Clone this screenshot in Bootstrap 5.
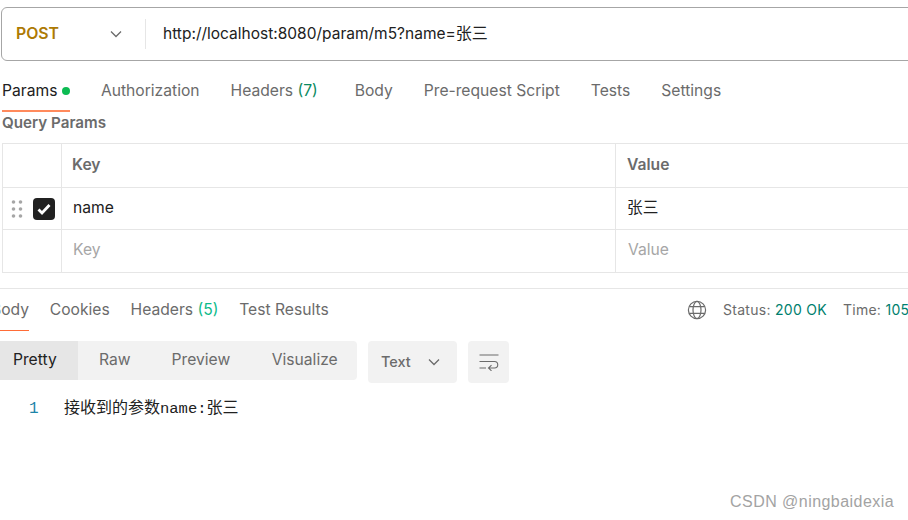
<!DOCTYPE html>
<html lang="zh">
<head>
<meta charset="utf-8">
<title>Postman</title>
<link rel="stylesheet" href="https://cdn.jsdelivr.net/npm/bootstrap@5.3.0/dist/css/bootstrap.min.css">
<style>
html,body{margin:0;height:520px;overflow:hidden;background:#fff}
body{font-family:Inter,"Noto Sans CJK SC",sans-serif;font-size:15.65px;color:#212121;position:relative}
.urlbar{height:54px;margin:7px -40px 0 1px;border:1px solid #a6a6a6;border-radius:6px;padding-left:14px}
.method{width:129px;height:30px;color:#ad7a03;font-weight:600;font-size:15.8px;padding-right:22px}
.urltext{border-left:1px solid #e6e6e6;height:30px;padding-left:17px;line-height:28px;color:#212121;font-size:15.5px;white-space:nowrap}
.urltext span{font-size:16px}
.reqtabs{margin:12px 0 0 2px;height:39px}
.ptab{color:#6b6b6b;white-space:nowrap;height:39px;line-height:36px}
.ptab.on{color:#212121;margin-right:-.5px}
.ptab.on::after{content:"";display:block;height:2px;background:#ff8a5c;margin-top:1px}
.count{color:#0b8a60}
.dotg{width:8px;height:8px;border-radius:50%;background:#0cbb52;display:inline-block;margin-left:5px;vertical-align:1px}
.qtitle{margin:0 0 0 2px;height:22px;line-height:21px;font-weight:600;color:#6b6b6b;font-size:15.2px}
.ptable{margin:9px 0 0 2px;width:950px;border-top:1px solid #e6e6e6;border-left:1px solid #e6e6e6;border-bottom:1px solid #e6e6e6}
.prow{display:grid;grid-template-columns:58px 554px 1fr;border-bottom:1px solid #e6e6e6}
.prow:last-child{border-bottom:0}
.prow>div{padding-left:10px;padding-bottom:1px;display:flex;align-items:center;border-left:1px solid #e6e6e6}
.prow>div:first-child{border-left:0;padding-left:0;padding-bottom:0}
.prow>div:last-child{padding-left:11px}
.r1{height:44px;font-weight:600;color:#6b6b6b}
.r2{height:42px}
.r3{height:42px;color:#a6a6a6}
.r3>div{padding-bottom:3px!important}
.r2>div,.r3>div{padding-left:11px}
.r3>div:last-child{padding-left:12px}
.r2>div:first-child,.r3>div:first-child{padding-left:0}
.grip{margin-left:8px}
.chk{width:22px;height:22px;border-radius:4px;background:#212121;margin-left:10px}
.rule{height:1px;background:#e6e6e6;margin:15px 0 0 0}
.restabs{height:41px;margin:1px -52px 0 0}
.rtab{color:#6b6b6b;white-space:nowrap;height:41px;line-height:39px}
.rtab.on{margin-left:-9px;width:38px}
.rtab.on::after{content:"";display:block;height:1px;background:#ff6c37;margin-top:1px}
.cnt5{color:#0cbb8a}
.stat{font-size:14px;color:#6b6b6b;white-space:nowrap;letter-spacing:.28px;height:41px;width:273px;padding-bottom:2px;margin-left:auto}
.stat-gap{margin-left:16px}
.ok{color:#007f6e}
.toolrow{margin-top:10px;height:42px}
.seg{background:#f2f2f2;height:39px;border-radius:0 4px 4px 0;width:357px}
.segi{height:39px;line-height:37px;color:#6b6b6b}
.segi.on{background:#e6e6e6;color:#212121;width:78px;padding-left:13px}
.gap-raw{margin-left:21px}
.gap-prev{margin-left:41px}
.gap-vis{margin-left:41.5px}
.sel{width:89px;height:42px;background:#f2f2f2;border-radius:4px;margin-left:11px;color:#6b6b6b;font-weight:500;font-size:14.5px;padding-left:13px}
.wrapb{width:41px;height:42px;background:#f2f2f2;border-radius:4px;margin-left:11px}
.code{margin-top:11px;height:30px;line-height:30px;padding-left:29px}
.ln{color:#1d85a8;font-family:"Liberation Mono",monospace;font-size:16px;width:35px}
.ct{font-family:"Liberation Mono","Noto Sans CJK SC",monospace;font-size:15.5px;color:#212121;white-space:nowrap}
.ct span{font-size:16px}
.wm{position:absolute;left:730px;top:490px;color:#a3a3a3;font-family:"Liberation Sans",sans-serif;font-size:16px;white-space:nowrap;letter-spacing:.46px}
.g31{margin-left:31px}.g37{margin-left:37px}.g21{margin-left:20.8px}
</style>
</head>
<body>
<div class="urlbar d-flex align-items-center">
  <div class="method d-flex align-items-center justify-content-between">POST
    <svg width="14" height="14" viewBox="0 0 14 14" fill="none" stroke="#6b6b6b" stroke-width="1.3"><path d="M2 4.5 7 9.5 12 4.5"/></svg>
  </div>
  <div class="urltext">http://localhost:8080/param/m5?name=<span>张三</span></div>
</div>

<nav class="reqtabs d-flex">
  <div class="ptab on">Params<span class="dotg"></span></div>
  <div class="ptab g31">Authorization</div>
  <div class="ptab g31">Headers <span class="count">(7)</span></div>
  <div class="ptab g37">Body</div>
  <div class="ptab g31">Pre-request Script</div>
  <div class="ptab g31">Tests</div>
  <div class="ptab g31">Settings</div>
</nav>
<div class="qtitle">Query Params</div>

<div class="ptable">
  <div class="prow r1"><div></div><div>Key</div><div>Value</div></div>
  <div class="prow r2">
    <div>
      <svg class="grip" width="12" height="20" viewBox="0 0 12 20" fill="#a6a6a6"><circle cx="2.5" cy="3" r="1.8"/><circle cx="9.5" cy="3" r="1.8"/><circle cx="2.5" cy="10" r="1.8"/><circle cx="9.5" cy="10" r="1.8"/><circle cx="2.5" cy="17" r="1.8"/><circle cx="9.5" cy="17" r="1.8"/></svg>
      <div class="chk d-flex align-items-center justify-content-center"><svg width="14" height="12" viewBox="0 0 14 12" fill="none" stroke="#fff" stroke-width="2.8"><path d="M1.5 6.5 5 10 12.5 2"/></svg></div>
    </div>
    <div>name</div><div>张三</div>
  </div>
  <div class="prow r3"><div></div><div>Key</div><div>Value</div></div>
</div>

<div class="rule"></div>
<div class="restabs d-flex">
  <div class="rtab on">Body</div>
  <div class="rtab g21">Cookies</div>
  <div class="rtab g21">Headers <span class="cnt5">(5)</span></div>
  <div class="rtab g21">Test Results</div>
  <div class="stat d-flex align-items-center flex-shrink-0">
    <svg width="20" height="20" viewBox="0 0 20 20" fill="none" stroke="#6b6b6b" stroke-width="1.2"><circle cx="10" cy="10" r="8.6"/><ellipse cx="10" cy="10" rx="4" ry="8.6"/><path d="M2.2 6.6H17.8M2.2 13.4H17.8"/></svg>
    <span class="stat-gap">Status: <span class="ok">200 OK</span></span>
    <span class="stat-gap">Time: <span class="ok">105 ms</span></span>
  </div>
</div>

<div class="toolrow d-flex">
  <div class="seg d-flex">
    <div class="segi on">Pretty</div>
    <div class="segi gap-raw">Raw</div>
    <div class="segi gap-prev">Preview</div>
    <div class="segi gap-vis">Visualize</div>
  </div>
  <div class="sel d-flex align-items-center">Text
    <svg class="ms-auto me-3" width="14" height="14" viewBox="0 0 14 14" fill="none" stroke="#6b6b6b" stroke-width="1.3"><path d="M2 4.5 7 9.5 12 4.5"/></svg>
  </div>
  <div class="wrapb d-flex align-items-center justify-content-center">
    <svg width="20" height="18" viewBox="0 0 20 18" fill="none" stroke="#6b6b6b" stroke-width="1.1"><path d="M0.5 2H19.5M0.5 8.5H15.5a3 3 0 0 1 0 6.5H10M12.5 12.2 9.5 15l3 2.8M0.5 15H7"/></svg>
  </div>
</div>

<div class="code d-flex">
  <div class="ln">1</div>
  <div class="ct"><span>接收到的参数</span>name:<span>张三</span></div>
</div>

<div class="wm">CSDN @ningbaidexia</div>
</body>
</html>
